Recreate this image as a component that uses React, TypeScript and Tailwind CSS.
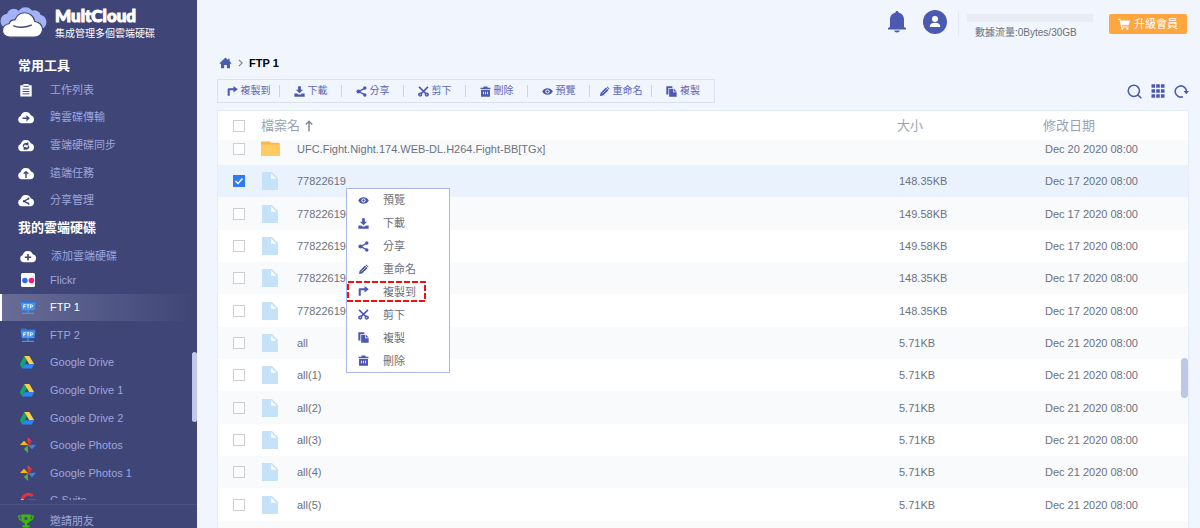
import React from "react";

type IconProps = { className?: string };

const CopyToIcon = ({ className }: IconProps) => (
  <svg viewBox="0 0 16 16" className={className} fill="currentColor" aria-hidden="true">
    <path d="M1 14V5c0-1.100.8-1.900 1.900-1.900H9.500V0L15.800 4.700 9.500 9.400V6H4v8z" />
  </svg>
);

const DownloadIcon = ({ className }: IconProps) => (
  <svg viewBox="0 0 16 16" className={className} fill="currentColor" aria-hidden="true">
    <path d="M6 .5h4v4.800h3.200L8 10.400 2.800 5.300H6z" />
    <path d="M.5 11h4l1.600 1.500h3.800L11.500 11h4v4.500H.5z" />
  </svg>
);

const ShareIcon = ({ className }: IconProps) => (
  <svg viewBox="0 0 16 16" className={className} fill="currentColor" aria-hidden="true">
    <path d="M13 3 4 8l9 5" fill="none" stroke="currentColor" strokeWidth="2" />
    <circle cx="3.600" cy="8" r="3" />
    <circle cx="12.800" cy="3" r="2.500" />
    <circle cx="12.800" cy="13" r="2.500" />
  </svg>
);

const CutIcon = ({ className }: IconProps) => (
  <svg viewBox="0 0 16 16" className={className} fill="none" stroke="currentColor" strokeWidth="2.300" aria-hidden="true">
    <path d="M1.500 1.200 11.500 11M14.500 1.200 4.500 11" />
    <circle cx="3.200" cy="12.500" r="2" />
    <circle cx="12.800" cy="12.500" r="2" />
  </svg>
);

const TrashIcon = ({ className }: IconProps) => (
  <svg viewBox="0 0 16 16" className={className} fill="currentColor" aria-hidden="true">
    <path d="M5 .8h6v1.600h4.200v2.300H.8V2.400H5z" />
    <path fillRule="evenodd" d="M1.500 5.800h13v9.700h-13zM4.500 8.500v3.500h1.300V8.500zm2.850 0v3.500h1.300V8.500zm2.850 0v3.500h1.300V8.500z" />
  </svg>
);

const EyeIcon = ({ className }: IconProps) => (
  <svg viewBox="0 0 16 16" className={className} aria-hidden="true">
    <path d="M.3 8C2 4.800 4.800 3.200 8 3.200S14 4.800 15.700 8C14 11.200 11.200 12.800 8 12.800S2 11.200.3 8z" fill="currentColor" />
    <circle cx="8" cy="8" r="3" fill="#fff" />
    <circle cx="8" cy="8" r="1.700" fill="currentColor" />
  </svg>
);

const PencilIcon = ({ className }: IconProps) => (
  <svg viewBox="0 0 16 16" className={className} fill="currentColor" aria-hidden="true">
    <path d="m1.500 14.500.8-4.500L10 2.300 13.700 6 6 13.700z" />
    <path d="m11 1.500 1-.9L15.400 4l-1 1z" />
    <path d="m4.800 11.200 6.500-6.500" stroke="#fff" strokeWidth=".8" />
  </svg>
);

const CopyIcon = ({ className }: IconProps) => (
  <svg viewBox="0 0 16 16" className={className} fill="currentColor" aria-hidden="true">
    <path d="M.5.5h8.700v2.300H3.500v9.700h-3z" />
    <path d="M4.600 3.900h5.700V9h5.200v6.500H4.600z" />
    <path d="M11.300 3.700 15.500 8h-4.200z" />
  </svg>
);

const HomeIcon = ({ className }: IconProps) => (
  <svg viewBox="0 0 16 16" className={className} fill="currentColor" aria-hidden="true">
    <path d="M8 .8 11.500 4V2.300h2v3.500L16 8.300l-1 1-1-.7V15H9.800v-4.500H6.200V15H2V8.600l-1 .7-1-1z" />
  </svg>
);

const ClipboardIcon = ({ className }: IconProps) => (
  <svg viewBox="0 0 16 16" className={className} aria-hidden="true">
    <path d="M1.500 2.500H5V1h6v1.500h3.500V15.500h-13z" fill="#fff" />
    <path d="M5 3.800h6M4 7h8M4 9.700h8M4 12.400h8" stroke="#3f4677" strokeWidth="1.100" />
  </svg>
);

const CloudIcon = ({ className, children }: IconProps & { children: React.ReactNode }) => (
  <svg viewBox="0 0 16 14" className={className} fill="none" aria-hidden="true">
    <path
      d="M4 13.300A3.700 3.700 0 0 1 2.700 6.100 5.300 5.300 0 0 1 12.800 5.300 4.050 4.050 0 0 1 12.300 13.300z"
      fill="#fff"
    />
    <g stroke="#3f4677" strokeWidth="1.400">{children}</g>
  </svg>
);

const FlickrIcon = ({ className }: IconProps) => (
  <svg viewBox="0 0 16 16" className={className} aria-hidden="true">
    <rect x="1" y="1" width="14" height="14" rx="1.500" fill="#fff" />
    <circle cx="4.900" cy="8.500" r="2.800" fill="#2a6fdb" />
    <circle cx="11.400" cy="8.500" r="2.800" fill="#ff1681" />
  </svg>
);

const FtpIcon = ({ className }: IconProps) => (
  <svg viewBox="0 0 16 16" className={className} aria-hidden="true">
    <path d="M1 1.500h5l1 1h8v2H1z" fill="#2779d8" />
    <path d="M.8 3.800h14.600l-1 7.400H1.800z" fill="#3f94f7" />
    <path d="M8 11v3M2 14.300h12M6.300 14.300h3.400" stroke="#3f94f7" strokeWidth="1.200" />
    <path
      d="M3.700 9.300V5.800h2M3.700 7.500h1.700M6.600 5.800h2.800M8 5.800v3.500M10.400 9.300V5.800h1.300a1 1 0 0 1 0 2h-1.300"
      fill="none"
      stroke="#fff"
      strokeWidth=".9"
    />
  </svg>
);

const DriveIcon = ({ className }: IconProps) => (
  <svg viewBox="1 0 16 16" className={className} aria-hidden="true">
    <path d="M5.300 2 7.800 6.300 3.300 14.500.8 10.300z" fill="#11a765" />
    <path d="M5.300 2h5l4.900 8.300h-4.900z" fill="#ffcf48" />
    <path d="M5.500 10.300h9.700l-2.400 4.200H3.200z" fill="#2a85fc" />
  </svg>
);

const PhotosIcon = ({ className }: IconProps) => (
  <svg viewBox="0 0 16 16" className={className} aria-hidden="true">
    <path d="M7.500 0 12 4.200 8 8z" fill="#e0434a" />
    <path d="M8 8V4.500L11 3.300V7z" fill="#c8323c" />
    <path d="M16 7.800 12 12.300 8 8z" fill="#3e82f1" />
    <path d="M8 16 3.900 12 8 8z" fill="#5bb045" />
    <path d="M0 8 4 3.700 8 8z" fill="#fbb917" />
    <path d="M8 8h3.500v3.500zM8 8v3.500L5 11z" fill="#3a8f3a" opacity=".5" />
  </svg>
);

const GSuiteIcon = ({ className }: IconProps) => (
  <svg viewBox="0 0 16 16" className={className} fill="none" strokeWidth="3" aria-hidden="true">
    <path d="M2.500 7A6 6 0 0 1 12.500 4" stroke="#e8313c" />
    <path d="M2.500 7a6 6 0 0 0 1.300 5.300" stroke="#fbb917" />
    <path d="M3.800 12.300A6 6 0 0 0 14 9H8.500" stroke="#3e82f1" />
  </svg>
);

const TrophyIcon = ({ className }: IconProps) => (
  <svg viewBox="0 0 16 14" className={className} aria-hidden="true">
    <path d="M3.500 1.800H.8c0 3.200 1.600 4.700 4 5M12.500 1.800h2.700c0 3.200-1.600 4.700-4 5" fill="none" stroke="#3db80e" strokeWidth="1.300" />
    <path d="M3.300.4h9.400v3.800c0 2.700-1.500 4.500-3.600 5v2h2.400v2.400h-7v-2.400h2.400v-2c-2.100-.5-3.600-2.300-3.600-5z" fill="#3db80e" />
    <path d="m8 2.200.7 1.400 1.500.2-1.100 1.100.3 1.500L8 5.700l-1.400.7.300-1.500-1.100-1.100 1.500-.2z" fill="#3f4677" />
  </svg>
);

const LogoMark = ({ className }: IconProps) => (
  <svg viewBox="0 0 48 32" className={className} aria-hidden="true">
    <g fill="#a3b3f5">
      <circle cx="8" cy="14" r="7.500" />
      <circle cx="14" cy="8.500" r="7" />
      <circle cx="26" cy="8.500" r="8.500" />
      <circle cx="35" cy="10" r="7" />
      <circle cx="40" cy="15" r="7.500" />
    </g>
    <path
      d="M10 30.500C5.800 30.500 2.500 27.500 2.500 23.700s3-6.700 6.800-6.900c.8-2.700 3.200-4.300 6-4C17 8.300 20.700 5.500 25 5.500c5.500 0 9.800 3.900 10.400 9 4.600.3 8 3.700 8 8 0 4.600-3.500 8-8.200 8z"
      fill="#fff"
      stroke="#3f4677"
      strokeWidth="1.200"
    />
    <path d="M14 19c4 1.800 13 1.800 18-.8" fill="none" stroke="#3f4677" strokeWidth="1.500" strokeLinecap="round" />
  </svg>
);

const FileIcon = () => (
  <svg viewBox="0 0 16 18" className="h-[18px] w-4" aria-hidden="true">
    <path d="M0 0h10l6 6v12H0z" fill="#c6e2f8" />
    <path d="M9 1.500v5.300h5.300z" fill="#fff" />
  </svg>
);

const FolderIcon = () => (
  <svg viewBox="0 0 19 15" className="h-[15px] w-[19px]" aria-hidden="true">
    <path d="M0 .5h8.500l1.500 1.300h8.500V4H0z" fill="#f9b84b" />
    <path d="M0 3.500h19V15H0z" fill="#ffca62" />
  </svg>
);

const tools = [
  { label: "工作列表", icon: <ClipboardIcon className="h-[14px] w-4" /> },
  {
    label: "跨雲碟傳輸",
    icon: (
      <CloudIcon className="h-[14px] w-4">
        <path d="M4.500 8.200h6M8.400 6l2.400 2.200-2.400 2.200" />
      </CloudIcon>
    ),
  },
  {
    label: "雲端硬碟同步",
    icon: (
      <CloudIcon className="h-[14px] w-4">
        <path d="M5.500 8.800A2.600 2.600 0 0 1 9.500 6M10.500 7.600a2.600 2.600 0 0 1-4 2.800M9.700 4.500v2H7.500M6.300 11.800v-2h2.200" />
      </CloudIcon>
    ),
  },
  {
    label: "遠端任務",
    icon: (
      <CloudIcon className="h-[14px] w-4">
        <path d="M8 12V6M5.700 7.800 8 5.600l2.300 2.200" />
      </CloudIcon>
    ),
  },
  {
    label: "分享管理",
    icon: (
      <CloudIcon className="h-[14px] w-4">
        <path d="M10.500 5.700 6 8.200l4.500 2.500" />
        <path d="M5 8.200h1.600M9.900 5.600h1.400M9.900 10.700h1.400" strokeWidth="2" />
      </CloudIcon>
    ),
  },
];

const drives = [
  { label: "Flickr", Icon: FlickrIcon },
  { label: "FTP 1", Icon: FtpIcon, active: true },
  { label: "FTP 2", Icon: FtpIcon },
  { label: "Google Drive", Icon: DriveIcon },
  { label: "Google Drive 1", Icon: DriveIcon },
  { label: "Google Drive 2", Icon: DriveIcon },
  { label: "Google Photos", Icon: PhotosIcon },
  { label: "Google Photos 1", Icon: PhotosIcon },
  { label: "G Suite", Icon: GSuiteIcon },
];

const toolbar = [
  { label: "複製到", Icon: CopyToIcon },
  { label: "下載", Icon: DownloadIcon },
  { label: "分享", Icon: ShareIcon },
  { label: "剪下", Icon: CutIcon },
  { label: "刪除", Icon: TrashIcon },
  { label: "預覽", Icon: EyeIcon },
  { label: "重命名", Icon: PencilIcon },
  { label: "複製", Icon: CopyIcon },
];

const menu = [
  { label: "預覽", Icon: EyeIcon },
  { label: "下載", Icon: DownloadIcon },
  { label: "分享", Icon: ShareIcon },
  { label: "重命名", Icon: PencilIcon },
  { label: "複製到", Icon: CopyToIcon, marked: true },
  { label: "剪下", Icon: CutIcon },
  { label: "複製", Icon: CopyIcon },
  { label: "刪除", Icon: TrashIcon },
];

const files = [
  { name: "77822619", size: "148.35KB", date: "Dec 17 2020 08:00", selected: true },
  { name: "77822619", size: "149.58KB", date: "Dec 17 2020 08:00" },
  { name: "77822619", size: "149.58KB", date: "Dec 17 2020 08:00" },
  { name: "77822619", size: "148.35KB", date: "Dec 17 2020 08:00" },
  { name: "77822619", size: "148.35KB", date: "Dec 17 2020 08:00" },
  { name: "all", size: "5.71KB", date: "Dec 21 2020 08:00" },
  { name: "all(1)", size: "5.71KB", date: "Dec 21 2020 08:00" },
  { name: "all(2)", size: "5.71KB", date: "Dec 21 2020 08:00" },
  { name: "all(3)", size: "5.71KB", date: "Dec 21 2020 08:00" },
  { name: "all(4)", size: "5.71KB", date: "Dec 21 2020 08:00" },
  { name: "all(5)", size: "5.71KB", date: "Dec 21 2020 08:00" },
  { name: "all(6)", size: "5.71KB", date: "Dec 21 2020 08:00" },
];

const Checkbox = ({ label, checked }: { label: string; checked?: boolean }) => (
  <span className="grid size-3 place-items-center">
    <input
      type="checkbox"
      aria-label={label}
      defaultChecked={checked}
      className="peer col-start-1 row-start-1 size-3 appearance-none border border-[#cfcfcf] bg-white checked:border-[#2f7bf5] checked:bg-[#2f7bf5]"
    />
    <svg viewBox="0 0 12 12" className="pointer-events-none invisible col-start-1 row-start-1 size-3 peer-checked:visible" aria-hidden="true">
      <path d="m2.500 6 2.500 2.500 4.500-5" fill="none" stroke="#fff" strokeWidth="1.500" />
    </svg>
  </span>
);

const Sidebar = () => (
  <aside className="relative flex w-[197px] shrink-0 flex-col overflow-hidden bg-[#3f4677] text-[11px] leading-4 text-[#9ca5dd]">
    <a href="#home" className="flex h-14 shrink-0 items-start gap-2 pt-[7px] text-white">
      <LogoMark className="h-8 w-[47px]" />
      <span className="flex flex-col">
        <span className="font-['Lato','Liberation_Sans',sans-serif] text-[17px] leading-[18px] font-black [-webkit-text-stroke:1px_white]">
          MultCloud
        </span>
        <span className="text-[10px] leading-[18px] whitespace-nowrap">集成管理多個雲端硬碟</span>
      </span>
    </a>
    <h2 className="h-5 shrink-0 pl-[18px] text-[13px] leading-5 font-bold text-white">常用工具</h2>
    <nav className="grid h-[138px] shrink-0 auto-rows-fr">
      {tools.map((item) => (
        <a key={item.label} href="#tool" className="flex items-center gap-4 pl-[18px]">
          {item.icon}
          {item.label}
        </a>
      ))}
    </nav>
    <h2 className="h-7 shrink-0 pl-[18px] text-[13px] leading-7 font-bold text-white">我的雲端硬碟</h2>
    <a href="#add" className="flex h-6 shrink-0 items-center gap-[14px] pt-1 pl-[19px]">
      <CloudIcon className="h-[14px] w-[18px]">
        <path d="M8 5v6.400M4.800 8.200h6.400" strokeWidth="1.600" />
      </CloudIcon>
      添加雲端硬碟
    </a>
    <nav className="min-h-0 flex-1 overflow-hidden">
      <div className="grid h-[248px] auto-rows-fr">
        {drives.map(({ label, Icon, active }) => (
          <a
            key={label}
            href="#drive"
            className={
              active
                ? "flex items-center gap-[14px] border-l-2 border-white bg-linear-to-r from-[#686c96] to-[#3f4677] pl-[18px] text-white"
                : "flex items-center gap-[14px] border-l-2 border-transparent pl-[18px]"
            }
          >
            <Icon className="size-4" />
            {label}
          </a>
        ))}
      </div>
    </nav>
    <div className="mt-1 h-6 shrink-0 border-t border-[#4a5183] pt-0.5">
      <a href="#invite" className="flex h-7 items-center gap-4 pl-[18px]">
        <TrophyIcon className="h-[14px] w-4" />
        邀請朋友
      </a>
    </div>
    <div className="absolute top-[352px] right-0 h-[70px] w-[5px] rounded-full bg-[#c0cae8]" />
  </aside>
);

const Header = () => (
  <header className="flex h-12 shrink-0 items-center justify-end pr-[13px]">
    <button type="button" aria-label="通知" className="mr-4 -mt-1">
      <svg viewBox="0 0 20 22" className="h-[22px] w-5" fill="#4b5ab0" aria-hidden="true">
        <path d="M10 0c.9 0 1.500.7 1.500 1.500 3.500.8 5.500 3.500 5.500 7V16l2 1v1.500H1V17l2-1V8.500c0-3.500 2-6.200 5.500-7C8.500.7 9.100 0 10 0z" />
        <path d="M7 19.600h6c-.4 1.300-1.500 2-3 2s-2.600-.7-3-2z" />
      </svg>
    </button>
    <button type="button" aria-label="帳戶" className="mr-[11px] -mt-1">
      <svg viewBox="0 0 24 24" className="size-6" aria-hidden="true">
        <circle cx="12" cy="12" r="12" fill="#4b5ab0" />
        <circle cx="12" cy="9" r="3" fill="#fff" />
        <path d="M6.800 17c0-3 1.700-4.300 5.200-4.300s5.200 1.300 5.200 4.300z" fill="#fff" />
      </svg>
    </button>
    <div className="mr-4 flex h-6 w-[135px] flex-col border-l border-[#e3e8f4] pt-0.5 pl-2">
      <div className="h-2 shrink-0 bg-[#e9ecf5]" />
      <span className="pt-[3px] pl-2 text-[10px] leading-4 whitespace-nowrap text-[#6c7078]">數據流量:0Bytes/30GB</span>
    </div>
    <button type="button" className="flex h-5 w-[78px] items-center justify-center gap-1 rounded-xs bg-[#ffa640] text-[11px] leading-4 text-white">
      <svg viewBox="0 0 14 14" className="size-3" fill="#fff" aria-hidden="true">
        <path d="M0 1h2.700l.5 1.800H14l-1.500 5.700H4.600l.3 1.300h7.400V11H3.700L1.800 2.400H0z" />
        <circle cx="5" cy="12.600" r="1.200" />
        <circle cx="11" cy="12.600" r="1.200" />
      </svg>
      升級會員
    </button>
  </header>
);

const ContextMenu = () => (
  <div
    role="menu"
    className="absolute top-[77px] left-[128px] grid h-[185px] w-[104px] auto-rows-fr border border-[#a9b4ea] bg-white text-[11px] leading-4 text-[#6c7078]"
  >
    {menu.map(({ label, Icon, marked }) => (
      <button key={label} type="button" role="menuitem" className="relative flex items-center gap-[14px] pl-[11px]">
        <Icon className="size-[11px] text-[#4b5ab0]" />
        {label}
        {marked && (
          <svg className="absolute top-0 left-0 h-[22px] w-[79px]" aria-hidden="true">
            <rect x="1" y="1" width="77" height="19" fill="none" stroke="#f01010" strokeWidth="2" strokeDasharray="6 2" />
          </svg>
        )}
      </button>
    ))}
  </div>
);

const FileTable = () => (
  <section className="relative min-h-0 flex-1 border border-b-0 border-[#e3ecf9] bg-white">
    <div className="h-full overflow-hidden">
      <table className="w-full table-fixed border-collapse text-left text-[11px] leading-4 text-[#6b7280]">
        <colgroup>
          <col className="w-[43px]" />
          <col className="w-[36px]" />
          <col />
          <col className="w-[146px]" />
          <col className="w-[145px]" />
        </colgroup>
        <thead>
          <tr className="h-[29px] text-[13px] text-[#9aa2b5]">
            <th className="pl-[15px] font-normal">
              <Checkbox label="全選" />
            </th>
            <th colSpan={2} className="font-normal">
              <span className="flex items-center gap-1">
                檔案名
                <svg viewBox="0 0 10 12" className="h-3 w-[10px]" fill="none" stroke="#8088a0" strokeWidth="1.500" aria-hidden="true">
                  <path d="M5 11.500V1.500M1.800 4.500 5 1.300l3.200 3.200" />
                </svg>
              </span>
            </th>
            <th className="font-normal">大小</th>
            <th className="font-normal">修改日期</th>
          </tr>
        </thead>
        <tbody>
          <tr className="h-[25px] bg-[#f9fafc]">
            <td className="pb-2 pl-[15px]">
              <Checkbox label="UFC.Fight.Night.174.WEB-DL.H264.Fight-BB[TGx]" />
            </td>
            <td className="pb-2">
              <FolderIcon />
            </td>
            <td className="truncate pb-2">UFC.Fight.Night.174.WEB-DL.H264.Fight-BB[TGx]</td>
            <td className="pb-2 pl-0.5" />
            <td className="pb-2 pl-0.5">Dec 20 2020 08:00</td>
          </tr>
          {files.map((file, index) => (
            <tr
              key={index}
              className={
                file.selected ? "h-8 bg-[#eaf2fe]" : "h-8 odd:bg-[#f9fafc] nth-[3n]:h-[33px]"
              }
            >
              <td className="pl-[15px]">
                <Checkbox label={file.name} checked={file.selected} />
              </td>
              <td className="pl-px">
                <FileIcon />
              </td>
              <td className="truncate">{file.name}</td>
              <td className="pl-0.5">{file.size}</td>
              <td className="pl-0.5">{file.date}</td>
            </tr>
          ))}
        </tbody>
      </table>
    </div>
    <div className="absolute top-[247px] right-0 h-10 w-[7px] rounded-full bg-[#bcc8e6]" />
    <ContextMenu />
  </section>
);

export default function App() {
  return (
    <div className="flex h-screen w-full overflow-hidden bg-[#f1f5fe] font-['Liberation_Sans','Noto_Sans_CJK_TC',sans-serif]">
      <Sidebar />
      <main className="flex min-w-0 flex-1 flex-col">
        <Header />
        <div className="flex min-h-0 flex-1 flex-col pr-[11px] pl-5">
          <div className="flex h-[31px] shrink-0 items-center gap-1.5 pb-0.5 text-[11px] leading-4 font-bold text-black">
            <a href="#home" aria-label="首頁" className="pl-0.5">
              <HomeIcon className="h-3 w-[13px] text-[#4b5ab0]" />
            </a>
            <svg viewBox="0 0 6 10" className="h-2 w-[5px]" fill="none" stroke="#8088a0" strokeWidth="1.500" aria-hidden="true">
              <path d="m1 1 4 4-4 4" />
            </svg>
            FTP 1
          </div>
          <div className="flex shrink-0 items-center justify-between pb-[7px]">
            <div className="grid h-6 w-[498px] grid-cols-8 items-center border border-[#d9e1f3]">
              {toolbar.map(({ label, Icon }) => (
                <button
                  key={label}
                  type="button"
                  className="flex h-3 items-center justify-center gap-[3px] border-r border-[#cdd4e6] text-[10px] leading-4 text-[#5d68b4] last:border-r-0"
                >
                  <Icon className="size-[11px] text-[#4b5ab0]" />
                  {label}
                </button>
              ))}
            </div>
            <div className="flex items-center gap-[9px] text-[#4b5ab0]">
              <button type="button" aria-label="搜尋">
                <svg viewBox="0 0 16 16" className="size-[15px]" fill="none" stroke="currentColor" strokeWidth="1.600" aria-hidden="true">
                  <circle cx="7.300" cy="7.300" r="6" />
                  <path d="m11.600 11.600 3.600 3.600" />
                </svg>
              </button>
              <button type="button" aria-label="網格檢視">
                <svg viewBox="0 0 14 14" className="size-[14px]" aria-hidden="true">
                  <path d="M.5 2h13M.5 7h13M.5 12h13" stroke="currentColor" strokeWidth="3.600" strokeDasharray="3.600 1.100" />
                </svg>
              </button>
              <button type="button" aria-label="重新整理">
                <svg viewBox="0 0 16 16" className="size-[15px]" fill="none" stroke="currentColor" strokeWidth="1.700" aria-hidden="true">
                  <path d="M9.500 13.600A6 6 0 1 1 13.300 8" />
                  <path d="M10.300 7.500h5.600l-2.800 3.300z" fill="currentColor" stroke="none" />
                </svg>
              </button>
            </div>
          </div>
          <FileTable />
        </div>
      </main>
    </div>
  );
}
